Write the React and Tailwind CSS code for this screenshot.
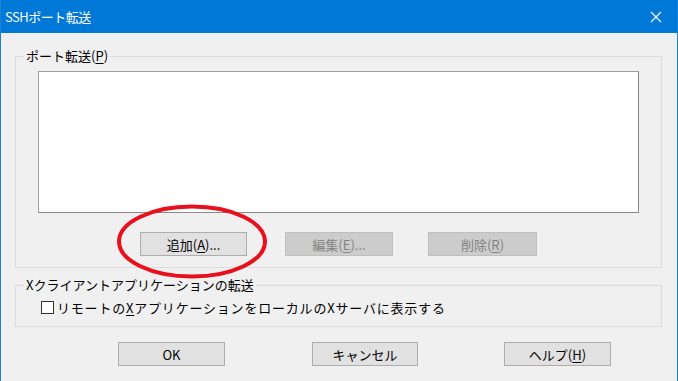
import React from "react";

const font = { fontFamily: '"Noto Sans CJK JP", "Noto Sans", sans-serif' };

// mnemonic letter, underlined like a Win32 accelerator
const U = ({ children }) => <span className="underline underline-offset-2">{children}</span>;

const Button = ({ children, disabled, className = "" }) => (
  <div
    className={`h-[24px] flex items-center justify-center border text-[13px] leading-none ${
      disabled
        ? "bg-[#cccccc] border-[#bfbfbf] text-[#838383]"
        : "bg-[#e1e1e1] border-[#adadad] text-black"
    } ${className}`}
  >
    {children}
  </div>
);

const GroupBox = ({ label, className = "", children }) => (
  <div className={`relative border border-[#dcdcdc] ${className}`}>
    <span className="absolute -top-[10px] left-[8px] bg-[#f0f0f0] px-[2px] text-[13px] leading-[18px] text-black">
      {label}
    </span>
    {children}
  </div>
);

export default function App() {
  return (
    <div
      style={font}
      className="w-[678px] h-[381px] bg-[#f0f0f0] border-x border-[#1883d7] flex flex-col overflow-hidden"
    >
      {/* Title bar */}
      <div className="h-[33px] shrink-0 bg-[#0078d7] flex items-center justify-between pl-[4px] pr-[15px]">
        <span className="text-white text-[13px] leading-none tracking-[-0.5px]">SSHポート転送</span>
        <svg width="12" height="12" viewBox="0 0 12 12">
          <path d="M1 1 L11 11 M11 1 L1 11" stroke="white" strokeWidth="1.2" />
        </svg>
      </div>

      {/* Port forwarding group */}
      <GroupBox
        className="ml-[14px] w-[647px] mt-[23px] h-[212px] pt-[14px] pl-[22px]"
        label={
          <>
            ポート転送(<U>P</U>)
          </>
        }
      >
        <div className="w-[601px] h-[142px] bg-white border border-[#a0a0a0] border-r-[#8a8a8a] border-b-[#8a8a8a]" />
        <div className="flex mt-[19px] ml-[102px]">
          <Button className="w-[107px]">
            追加(<U>A</U>)...
          </Button>
          <Button disabled className="w-[108px] ml-[38px]">
            編集(<U>E</U>)...
          </Button>
          <Button disabled className="w-[109px] ml-[35px]">
            削除(<U>R</U>)
          </Button>
        </div>
      </GroupBox>

      {/* X client forwarding group */}
      <GroupBox
        className="ml-[14px] w-[647px] mt-[17px] h-[42px] pt-[15px] pl-[25px]"
        label="Xクライアントアプリケーションの転送"
      >
        <div className="flex items-center h-[13px]">
          <div className="w-[13px] h-[13px] bg-white border border-[#333333]" />
          <span className="ml-[3px] text-[13px] leading-none tracking-[0.8px] text-black">
            リモートの<U>X</U>アプリケーションをローカルのXサーバに表示する
          </span>
        </div>
      </GroupBox>

      {/* Dialog buttons */}
      <div className="flex mt-[15px] ml-[117px]">
        <Button className="w-[107px]">OK</Button>
        <Button className="w-[106px] ml-[87px]">キャンセル</Button>
        <Button className="w-[107px] ml-[86px]">
          ヘルプ(<U>H</U>)
        </Button>
      </div>

      {/* Red annotation ellipse around the add button */}
      <svg className="absolute left-0 top-0 pointer-events-none" width="678" height="381">
        <ellipse cx="192" cy="241.5" rx="73" ry="35" fill="none" stroke="#e8101c" strokeWidth="4" />
      </svg>
    </div>
  );
}
